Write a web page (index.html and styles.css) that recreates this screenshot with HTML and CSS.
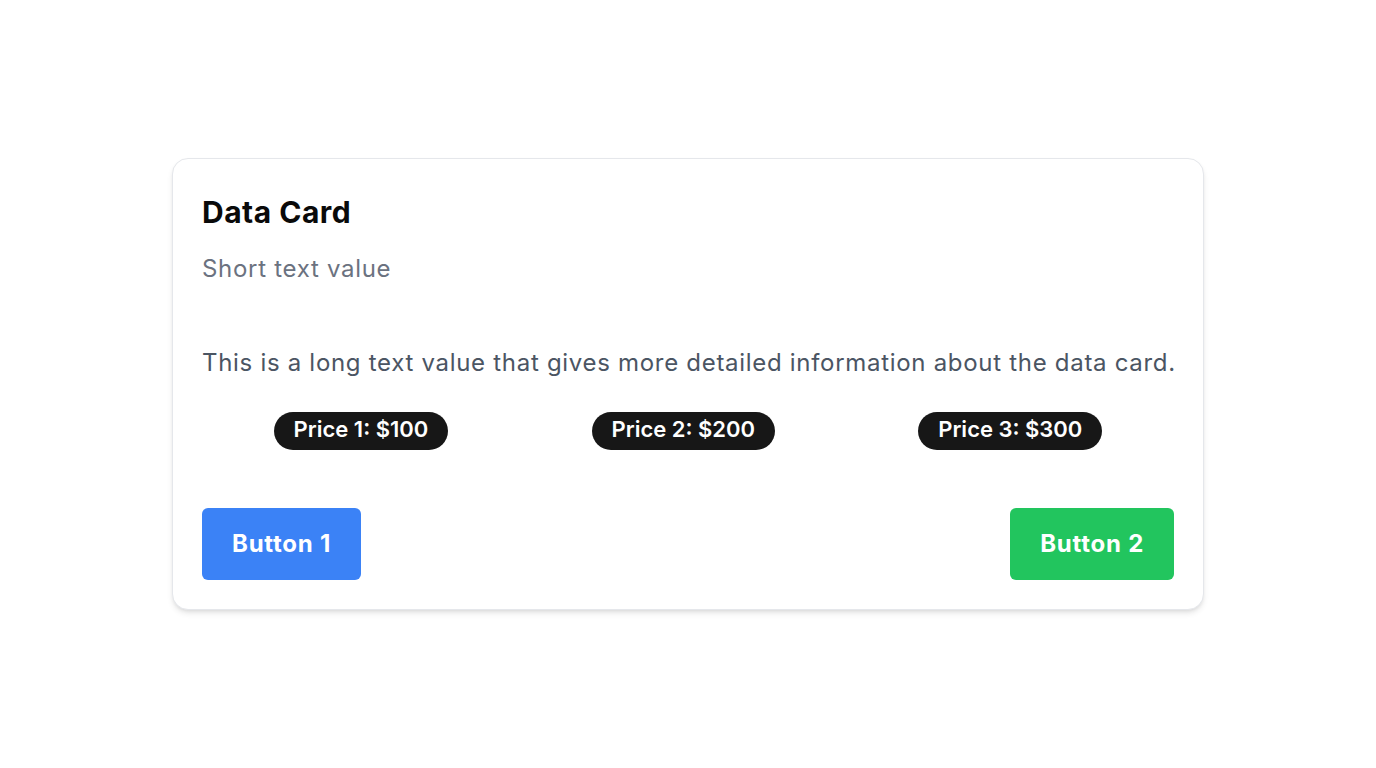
FILE: index.html
```html
<!DOCTYPE html>
<html lang="en">
<head>
<meta charset="utf-8">
<title>Data Card</title>
<link rel="stylesheet" href="styles.css">
</head>
<body>
<main class="page">
  <section class="card">
    <h2 class="card-title">Data Card</h2>
    <p class="card-short">Short text value</p>
    <p class="card-long">This is a long text value that gives more detailed information about the data card.</p>
    <div class="prices">
      <span class="price">Price 1: $100</span>
      <span class="price">Price 2: $200</span>
      <span class="price">Price 3: $300</span>
    </div>
    <div class="actions">
      <button class="btn btn-blue">Button 1</button>
      <button class="btn btn-green">Button 2</button>
    </div>
  </section>
</main>
</body>
</html>
```

FILE: styles.css
```css
* { box-sizing: border-box; }
html, body { margin: 0; padding: 0; }
body {
  font-family: Inter, "Noto Sans", sans-serif;
  background: #ffffff;
  color: #111827;
}
.page {
  height: 768px;
  display: flex;
  align-items: center;
  justify-content: center;
}
.card {
  width: 1032px;
  height: 452px;
  border: 1px solid #e5e7eb;
  border-radius: 16px;
  background: #fff;
  box-shadow: 0 4px 6px -1px rgba(0,0,0,0.1), 0 2px 4px -2px rgba(0,0,0,0.1);
  padding: 29px;
  display: flex;
  flex-direction: column;
}
.card-title {
  margin: 6px 0 0;
  font-size: 30px;
  font-weight: 700;
  letter-spacing: 0.5px;
  color: #0a0a0a;
  line-height: 36px;
}
.card-short {
  margin: 23px 0 0;
  font-size: 24px;
  line-height: 32px;
  letter-spacing: 0.7px;
  color: #6b7280;
}
.card-long {
  margin: 62px 0 0;
  font-size: 24px;
  line-height: 32px;
  letter-spacing: 0.7px;
  white-space: nowrap;
  color: #4b5563;
}
.prices {
  margin-top: 33px;
  display: flex;
  justify-content: space-around;
}
.price {
  background: #171717;
  color: #fff;
  font-size: 22px;
  font-weight: 600;
  height: 38px;
  line-height: 34px;
  padding: 0 20px 4px;
  border-radius: 19px;
}
.actions {
  margin-top: auto;
  display: flex;
  justify-content: space-between;
}
.btn {
  font-family: Inter, "Noto Sans", sans-serif;
  font-size: 24px;
  font-weight: 700;
  letter-spacing: 0.75px;
  color: #fff;
  border: none;
  border-radius: 6px;
  height: 72px;
  padding: 0 30px 2px;
}
.btn-blue { background: #3b82f6; }
.btn-green { background: #22c55e; }
```
